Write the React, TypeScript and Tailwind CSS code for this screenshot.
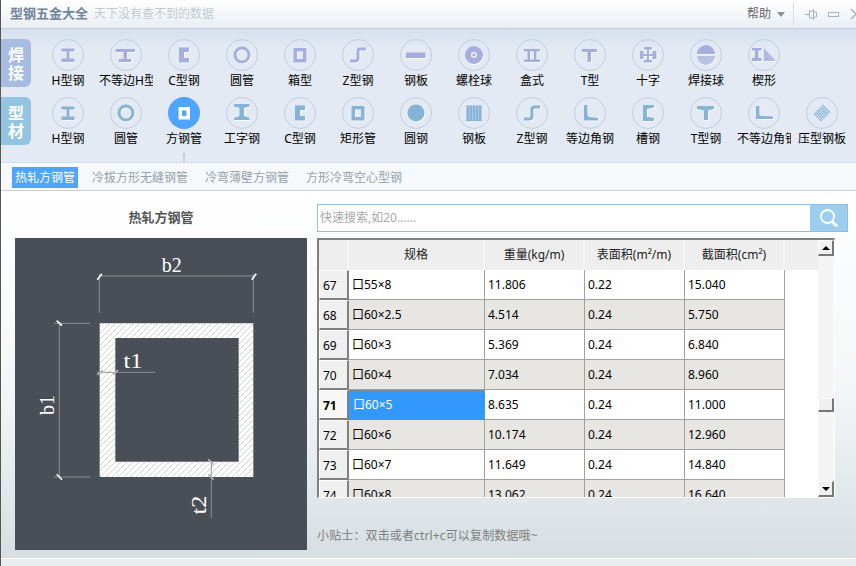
import type { ReactNode } from 'react';

const Ibeam = () => <path d="M9.5 9.5h13v3h-5v7h5v3.5h-13V19.500h5v-7h-5z" />;
const RoundTube = () => <circle cx="16" cy="16" r="7" fill="none" stroke="currentColor" strokeWidth="3" />;
const BoxTube = () => <path fillRule="evenodd" d="M9.500 9h13v14.500h-13zM13 12.500v7.500h6v-7.500z" />;
const Channel = () => <path d="M11 8.500h10v4.500h-5v6h5v4.500H11z" />;
const Zed = () => <path d="M8 22h5.500q2.500 0 2.500-2.500v-7q0-2.500 2.500-2.500H24" fill="none" stroke="currentColor" strokeWidth="3" />;

const weldIcons: { label: string; icon: ReactNode }[] = [
  { label: 'H型钢', icon: <Ibeam /> },
  { label: '不等边H型钢', icon: <path d="M5.500 10h19.500v3h-8v7h4v3H9v-3h4.500v-7h-8z" /> },
  { label: 'C型钢', icon: <Channel /> },
  { label: '圆管', icon: <RoundTube /> },
  { label: '箱型', icon: <BoxTube /> },
  { label: 'Z型钢', icon: <Zed /> },
  { label: '钢板', icon: <path d="M6 13.500h19.500v5.500H6z" /> },
  {
    label: '螺栓球',
    icon: (
      <path
        fillRule="evenodd"
        d="M16 7a9 9 0 1 0 0 18a9 9 0 1 0 0-18zM16 13a3 3 0 1 1 0 6a3 3 0 1 1 0-6zM16 14.500a1.500 1.500 0 1 0 0 3a1.500 1.500 0 1 0 0-3z"
      />
    ),
  },
  { label: '盒式', icon: <path d="M8 10h16v2.500h-3.500v8H24V23H8v-2.500h3.500v-8H8zM14 12.500v8h4v-8z" fillRule="evenodd" /> },
  { label: 'T型', icon: <path d="M8 10h15v3h-6v10h-3.500V13H8z" /> },
  {
    label: '十字',
    icon: (
      <path d="M12 8h8v2.500h-3V15h3.500v-3H24.500v8h-4v-3H17v4h3v2.500h-8V21h3v-4h-3.500v3H8v-8h3.500v3H15v-4.500h-3z" />
    ),
  },
  {
    label: '焊接球',
    icon: (
      <>
        <path d="M7 15a9 9 0 0 1 18 0z" />
        <path d="M7 17a9 9 0 0 0 18 0z" opacity="0.75" />
      </>
    ),
  },
  {
    label: '楔形',
    icon: (
      <>
        <path d="M4 9h9.500v2.500h-3V19h3v3H4v-3h3v-7.500H4z" />
        <path d="M16 9l12 13H16z" opacity="0.85" />
      </>
    ),
  },
];

const shapeIcons: { label: string; icon: ReactNode; active?: boolean; flat?: boolean }[] = [
  { label: 'H型钢', icon: <Ibeam /> },
  { label: '圆管', icon: <circle cx="16" cy="16" r="7" fill="none" stroke="currentColor" strokeWidth="3" /> },
  { label: '方钢管', icon: <path fillRule="evenodd" d="M10.500 10h11.500v12.500H10.500zM14 13.500v5.500h4.500v-5.500z" />, active: true },
  { label: '工字钢', icon: <path d="M8 7h15.500v2.500l-5.500 1.500v8l5.500 2v2H8v-2l5.500-2v-8L8 9.500z" /> },
  { label: 'C型钢', icon: <Channel /> },
  { label: '矩形管', icon: <BoxTube /> },
  { label: '圆钢', icon: <circle cx="16" cy="16" r="8.500" /> },
  {
    label: '钢板',
    flat: true,
    icon: (
      <>
        <path d="M8 8.500h16v15.500H8z" />
        <path fill="none" stroke="#fff" strokeOpacity="0.65" strokeDasharray="1 2" d="M8 10h16M8 12h16M8 14h16M8 16h16M8 18h16M8 20h16M8 22h16" />
      </>
    ),
  },
  { label: 'Z型钢', icon: <Zed /> },
  { label: '等边角钢', icon: <path d="M10 8h3.500v10q0 1.500 2 2l8.500 1v2.500H10z" /> },
  { label: '槽钢', icon: <path d="M11 8h11v2.500l-7 1.500v8l7 1v3H11z" /> },
  { label: 'T型钢', icon: <path d="M7 9h17v3l-6 1.500V23h-4v-9.500L7 12z" /> },
  { label: '不等边角钢', icon: <path d="M8 9h3.500v8.500q0 1 2 1.500l11.500.5V22H8z" /> },
  {
    label: '压型钢板',
    flat: true,
    icon: (
      <path
        fill="none"
        stroke="currentColor"
        strokeWidth="1.200"
        d="M7.900 16.400L15.600 24.100M9.300 14.900L17.100 22.700M10.700 13.500L18.500 21.300M12.100 12.100L19.900 19.900M13.500 10.700L21.300 18.500M14.900 9.300L22.700 17.100M16.400 7.900L24.100 15.600"
      />
    ),
  },
];

const subTabs = ['热轧方钢管', '冷拔方形无缝钢管', '冷弯薄壁方钢管', '方形冷弯空心型钢'];

const rows = [
  { no: 67, spec: '口55×8', weight: '11.806', surface: '0.22', area: '15.040' },
  { no: 68, spec: '口60×2.5', weight: '4.514', surface: '0.24', area: '5.750' },
  { no: 69, spec: '口60×3', weight: '5.369', surface: '0.24', area: '6.840' },
  { no: 70, spec: '口60×4', weight: '7.034', surface: '0.24', area: '8.960' },
  { no: 71, spec: '口60×5', weight: '8.635', surface: '0.24', area: '11.000' },
  { no: 72, spec: '口60×6', weight: '10.174', surface: '0.24', area: '12.960' },
  { no: 73, spec: '口60×7', weight: '11.649', surface: '0.24', area: '14.840' },
  { no: 74, spec: '口60×8', weight: '13.062', surface: '0.24', area: '16.640' },
];

const ToolItem = ({ label, icon, active, flat, colorClass }: { label: string; icon: ReactNode; active?: boolean; flat?: boolean; colorClass: string }) => (
  <div className="flex w-[58px] shrink-0 flex-col items-center">
    <div
      className={
        active
          ? 'size-8 rounded-full bg-[#4fa5fb] text-white'
          : 'size-8 rounded-full border border-[#c2cfe2] ' + colorClass
      }
    >
      <svg viewBox="0 0 32 32" className={active ? 'size-8' : '-m-px size-8'} fill="currentColor">
        {!active && !flat && (
          <g transform="translate(0.8 0.8)" className="text-white">
            {icon}
          </g>
        )}
        {icon}
      </svg>
    </div>
    <div className="mt-[2px] w-[54px] overflow-hidden text-center text-xs leading-4 whitespace-nowrap text-black">{label}</div>
  </div>
);

const SideTab = ({ chars, colorClass }: { chars: string[]; colorClass: string }) => (
  <div className={'mr-2 flex h-12 w-[30px] shrink-0 flex-col items-center justify-center rounded-r-md pt-[2px] text-base leading-[18px] font-bold text-white ' + colorClass}>
    {chars.map((c) => (
      <span key={c}>{c}</span>
    ))}
  </div>
);

const ProfileDrawing = () => (
  <svg viewBox="0 0 292 312" className="h-[312px] w-[292px]" fontFamily="'Liberation Serif', serif">
    <defs>
      <pattern id="hatch" width="6" height="6" patternUnits="userSpaceOnUse">
        <path d="M-1 7L7 -1" stroke="#c6c6c6" strokeWidth="0.8" />
      </pattern>
    </defs>
    <path fillRule="evenodd" fill="#fff" d="M84.700 85.300H238.300V239H84.700zM100.300 100V223.700H223.700V100z" />
    <path fillRule="evenodd" fill="url(#hatch)" d="M84.700 85.300H238.300V239H84.700zM100.300 100V223.700H223.700V100z" />
    <g stroke="#8d9096" strokeWidth="1" fill="none">
      <path d="M84.300 38H239M84.300 35.700V74.700M238.300 35.700V74.700" />
      <path d="M44.300 85.300V239M39 85.300H75M39 239H75" />
      <path d="M81.700 134.300H140" />
      <path d="M196.300 223.700V279.700" />
    </g>
    <g stroke="#fff" strokeWidth="1.600">
      <path d="M82.300 41.700L87 35.700M236.700 41.700L241.300 35.700" />
      <path d="M41.700 82.700L47 87.700M41.700 236.300L47 241.700" />
    </g>
    <g stroke="#b5b5b5" strokeWidth="1.600">
      <path d="M82.300 137L87.700 131.700M98 137L103 132" />
      <path d="M193.300 221.300L198.700 226.300M193.300 236.300L198.700 241.700" />
    </g>
    <g fill="#fff" fontSize="21">
      <text x="156.700" y="33.500" textAnchor="middle" textLength="20" lengthAdjust="spacingAndGlyphs">b2</text>
      <text x="118" y="129.700" textAnchor="middle" textLength="19" lengthAdjust="spacingAndGlyphs">t1</text>
      <text transform="translate(39 167) rotate(-90)" textAnchor="middle" textLength="20" lengthAdjust="spacingAndGlyphs">b1</text>
      <text transform="translate(191 267) rotate(-90)" textAnchor="middle" textLength="19" lengthAdjust="spacingAndGlyphs">t2</text>
    </g>
  </svg>
);

const ScrollButton = ({ up }: { up?: boolean }) => (
  <div className="flex h-4 w-4 items-center justify-center border-t border-l border-t-white border-l-white border-r-2 border-b-2 border-r-[#777] border-b-[#777] bg-[#f0f0f0]">
    <svg viewBox="0 0 8 4" className="h-1 w-2">
      <path d={up ? 'M0 4L4 0L8 4z' : 'M0 0L4 4L8 0z'} fill="#000" />
    </svg>
  </div>
);

const DataTable = () => (
  <div className="flex h-[260px] w-[518px] border-t-2 border-r border-b border-l-2 border-t-[#808080] border-r-white border-b-white border-l-[#808080]">
    <div className="h-full w-[499px] overflow-hidden bg-white">
      <div className="flex h-[30px] bg-[#eeeeee] text-center text-xs leading-[30px] text-[#222]">
        <div className="w-[30px] border-r-2 border-[#f6f6f6]" />
        <div className="w-[136px] border-r-2 border-[#f6f6f6]">规格</div>
        <div className="w-[100px] border-r-2 border-[#f6f6f6]">重量(kg/m)</div>
        <div className="w-[100px] border-r-2 border-[#f6f6f6]">表面积(m²/m)</div>
        <div className="w-[100px] border-r-2 border-[#f6f6f6]">截面积(cm²)</div>
      </div>
      {rows.map((row, index) => {
        const selected = row.no === 71;
        const cell = 'h-full border-r border-b border-[#a0a0a0] pl-[3px] ';
        const tint = index % 2 === 1 ? 'bg-[#e8e6e3]' : 'bg-white';
        return (
          <div key={row.no} className="flex h-[30px] text-xs leading-[29px] text-black">
            <div className={'h-full w-[30px] border-t border-r-2 border-b-2 border-l border-t-white border-r-[#808080] border-b-[#808080] border-l-white pl-[3px] ' + (selected ? 'bg-[#f7f7f7] font-bold' : 'bg-[#f0f0f0]')}>
              {row.no}
            </div>
            <div className={selected ? 'h-full w-[136px] border border-dotted border-[#d9761c] bg-[#3399ff] pl-[3px] leading-[27px] text-white' : cell + 'w-[136px] ' + tint}>
              {row.spec}
            </div>
            <div className={cell + 'w-[100px] ' + tint}>{row.weight}</div>
            <div className={cell + 'w-[100px] ' + tint}>{row.surface}</div>
            <div className={cell + 'w-[100px] ' + tint}>{row.area}</div>
          </div>
        );
      })}
    </div>
    <div className="flex w-4 flex-col bg-[repeating-conic-gradient(#ececec_0_25%,#ffffff_0_50%)] bg-[length:2px_2px]">
      <ScrollButton up />
      <div className="h-[142px]" />
      <div className="h-[14px] w-4 border-t border-l border-t-white border-l-white border-r-2 border-b-2 border-r-[#777] border-b-[#777] bg-[#f0f0f0]" />
      <div className="flex-1" />
      <ScrollButton />
    </div>
  </div>
);

export default function App() {
  return (
    <div className="flex h-[566px] w-[856px] flex-col overflow-hidden border-l border-[#555] font-['Noto_Sans','Noto_Sans_CJK_SC',sans-serif]">
      {/* Title bar */}
      <header className="flex h-[29px] shrink-0 items-center border-b border-[#c3cfdf] bg-linear-to-b from-white to-[#e9eef4] pl-[9px]">
        <span className="text-[13px] font-bold text-[#70859a]">型钢五金大全</span>
        <span className="ml-[6px] text-xs text-[#c3c9cf]">天下没有查不到的数据</span>
        <div className="-mr-[6px] ml-auto flex items-center">
          <span className="text-xs text-[#666]">帮助</span>
          <svg viewBox="0 0 8 5" className="ml-[6px] h-[5px] w-2">
            <path d="M0 0h8L4 5z" fill="#8a8f95" />
          </svg>
          <div className="mr-[11px] ml-2 h-[24px] w-px bg-[#d7dde3]" />
          <svg viewBox="0 0 13 13" className="size-[13px]" fill="none" stroke="#aab3bc">
            <path d="M0 6.500h4M4.500 2.500v8M4.500 3.500l4-1v8l-4-1M8.500 1v11M8.500 4h3v5h-3" />
          </svg>
          <svg viewBox="0 0 11 5" className="ml-[10px] h-[5px] w-[11px]" fill="none" stroke="#aab3bc">
            <rect x="0.500" y="0.500" width="10" height="4" />
          </svg>
          <svg viewBox="0 0 12 12" className="ml-[11px] size-3" fill="none" stroke="#aab3bc" strokeWidth="1.500">
            <path d="M1 1l10 10M11 1L1 11" />
          </svg>
        </div>
      </header>

      {/* Profile toolbar */}
      <section className="h-[134px] shrink-0 border-b border-[#d7dee6] bg-linear-to-b from-[#d5dfee] to-[#e3eaf3] to-[14%] pt-[10px]">
        <div className="flex h-[58px]">
          <SideTab chars={['焊', '接']} colorClass="bg-[#a6bde1]" />
          {weldIcons.map((item) => (
            <ToolItem key={item.label} label={item.label} icon={item.icon} colorClass="text-[#a5aedf]" />
          ))}
        </div>
        <div className="flex h-[56px]">
          <SideTab chars={['型', '材']} colorClass="bg-[#93c5e3]" />
          {shapeIcons.map((item) => (
            <ToolItem key={item.label} label={item.label} icon={item.icon} active={item.active} flat={item.flat} colorClass="text-[#86b3d6]" />
          ))}
        </div>
        <div className="ml-[182px] h-[9px] w-[2px] bg-[#c9cfd6]" />
      </section>

      {/* Sub tabs */}
      <nav className="flex h-[28px] shrink-0 items-center gap-[11px] border-b border-[#c9d0d8] bg-[#f6f9fc] pt-[1px] pl-[11px]">
        {subTabs.map((tab, index) => (
          <span
            key={tab}
            className={index === 0 ? 'bg-[#4fa5fb] px-[3px] text-xs leading-[21px] text-white' : 'px-[3px] text-xs leading-[21px] text-[#97a1ab]'}
          >
            {tab}
          </span>
        ))}
      </nav>

      {/* Main content */}
      <main className="flex min-h-0 flex-1 bg-linear-to-b from-white via-[#f3f6f8] via-[55%] to-[#d7dee2]">
        <div className="ml-[14px] w-[292px]">
          <h2 className="h-[47px] pt-[17px] text-center text-[13px] leading-[18px] font-bold text-[#555]">热轧方钢管</h2>
          <div className="h-[312px] bg-[#4a4e57]">
            <ProfileDrawing />
          </div>
        </div>
        <div className="ml-[10px] w-[531px] pt-[13px]">
          <div className="flex h-[28px] border border-[#8fbfe0] bg-white">
            <input
              readOnly
              placeholder="快速搜索,如20......"
              className="min-w-0 flex-1 bg-transparent pl-[2px] text-xs outline-none placeholder:text-[#a9a9a9]"
            />
            <button className="flex w-[37px] items-center justify-center bg-[#9ccfee]">
              <svg viewBox="0 0 20 20" className="size-5" fill="none" stroke="#fff">
                <circle cx="8.500" cy="8.500" r="6.500" strokeWidth="1.800" />
                <path d="M13 13.500l5 5" strokeWidth="3" />
              </svg>
            </button>
          </div>
          <div className="mt-[6px]">
            <DataTable />
          </div>
          <p className="mt-[30px] text-xs leading-4 tracking-[0.14px] text-[#7d7f82]">小贴士：双击或者ctrl+c可以复制数据哦~</p>
        </div>
      </main>

      <footer className="h-[8px] shrink-0 border-t border-white bg-[#e9edef]" />
    </div>
  );
}
